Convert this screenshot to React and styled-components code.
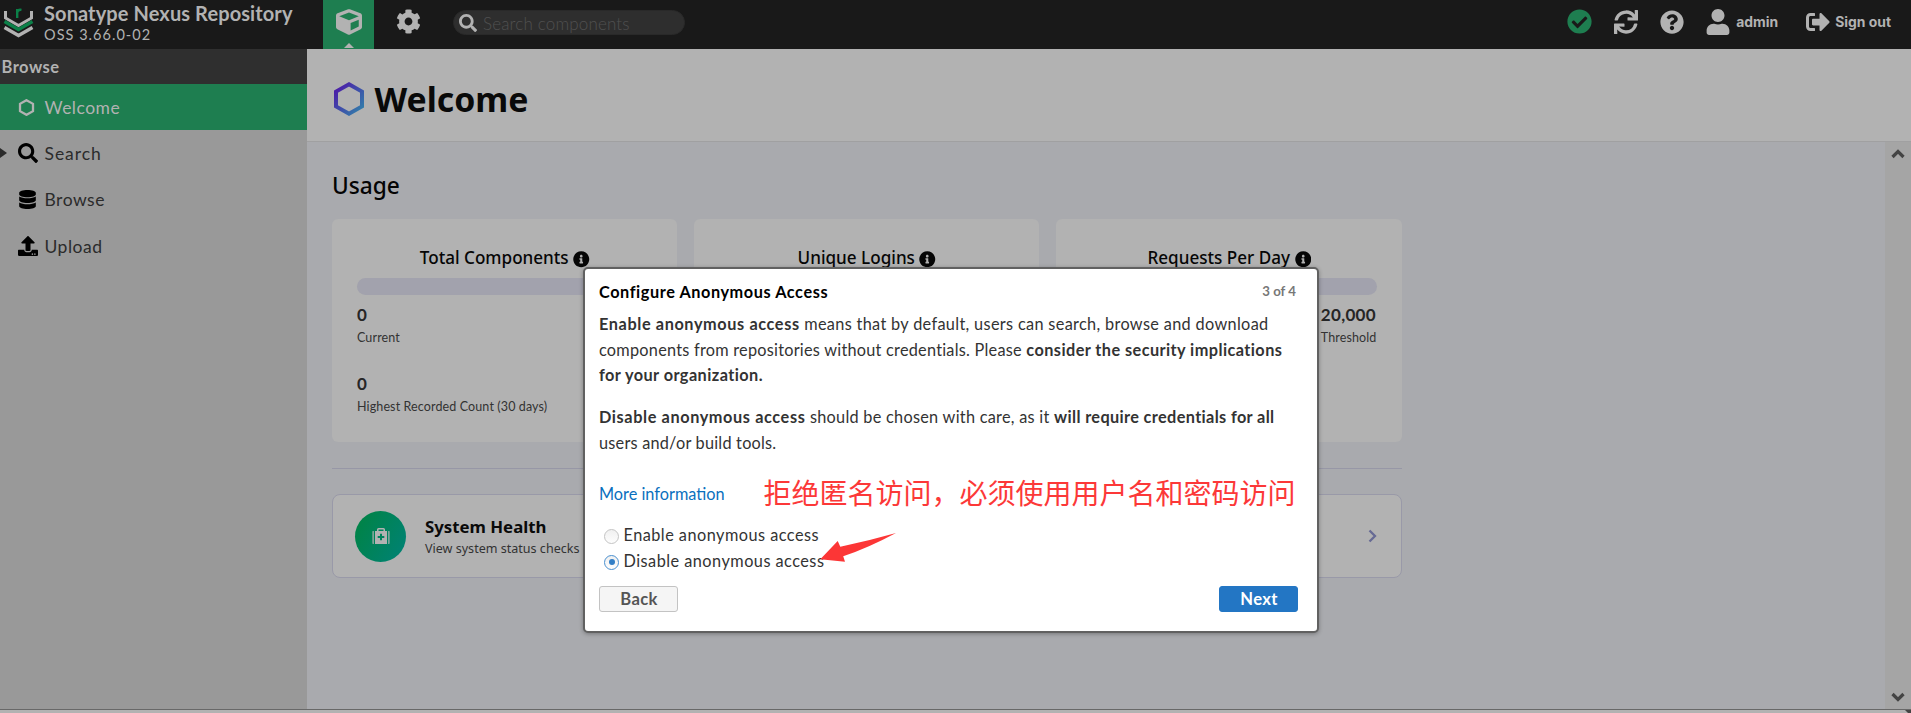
import React from 'react';
import styled, { createGlobalStyle } from 'styled-components';
import {
  FaCog, FaCube, FaSearch, FaCheckCircle, FaSync, FaQuestionCircle, FaUser,
  FaSignOutAlt, FaDatabase, FaUpload, FaInfoCircle,
} from 'react-icons/fa';

const Global = createGlobalStyle`
  * { box-sizing: border-box; }
  body { margin: 0; overflow: hidden; background: #b2b2b2; }
  svg { display: block; flex: none; }
`;

const Page = styled.div`
  position: relative;
  width: 100%;
  height: 713px;
  display: flex;
  flex-direction: column;
  font-family: Lato, sans-serif;
  color: #262626;
  white-space: nowrap;
`;

/* Header */
const Header = styled.header`
  height: 49px;
  flex: none;
  display: flex;
  background: #191919;
  color: #b2b2b2;
`;
const Brand = styled.div`
  width: 323px;
  display: flex;
  padding-left: 3px;
`;
const LogoSlot = styled.div`
  width: 41px;
  padding-top: 7px;
`;
const ProductName = styled.div`
  padding-top: 1px;
  font-size: 20px;
  font-weight: 700;
  line-height: 24px;
  letter-spacing: 0.1px;
`;
const Version = styled.div`
  font-size: 14.5px;
  line-height: 19px;
  letter-spacing: 1.03px;
`;
const ModeButton = styled.div`
  width: 51px;
  height: 49px;
  display: flex;
  flex-direction: column;
  align-items: center;
  padding-top: 8.5px;
  background: ${(p) => (p.$active ? '#1e7e50' : 'transparent')};
`;
const Caret = styled.div`
  margin-top: 8px;
  border: 5px solid transparent;
  border-top: 0;
  border-bottom-color: #b2b2b2;
`;
const GearSlot = styled.div`
  width: 79px;
  padding: 9px 0 0 22px;
`;
const SearchBox = styled.div`
  margin-top: 10px;
  width: 232px;
  height: 25px;
  display: flex;
  align-items: center;
  gap: 6px;
  padding-left: 5px;
  border-radius: 13px;
  background: #2e2e2e;
  border: 1px solid #292929;
`;
const Placeholder = styled.span`
  font-weight: 300;
  font-size: 17px;
  letter-spacing: 0.16px;
  line-height: 22px;
  padding-top: 3px;
  color: #505050;
`;
const Tools = styled.div`
  margin-left: auto;
  height: 43px;
  display: flex;
  align-items: center;
  padding-right: 20px;
`;
const Tool = styled.div`
  display: flex;
  align-items: center;
  gap: ${(p) => p.$gap || 0}px;
  margin-right: ${(p) => p.$after}px;
  color: ${(p) => p.$color || '#b2b2b2'};
  font: 700 13.9px/20px Inter, sans-serif;
`;

/* Sidebar */
const Body = styled.div`
  flex: 1;
  display: flex;
  min-height: 0;
`;
const Sidebar = styled.nav`
  width: 307px;
  flex: none;
  background: #999;
`;
const SidebarTitle = styled.div`
  height: 35px;
  padding-left: 1.5px;
  background: #2f2f2f;
  color: #b2b2b2;
  font-size: 16.5px;
  font-weight: 700;
  line-height: 36px;
  letter-spacing: 0.5px;
`;
const NavItem = styled.div`
  height: ${(p) => p.$h || 46}px;
  display: flex;
  align-items: center;
  font-size: 17.5px;
  letter-spacing: ${(p) => p.$track || 0.5}px;
  background: ${(p) => (p.$active ? '#1e7e50' : 'transparent')};
  color: ${(p) => (p.$active ? '#b2b2b2' : '#2b2b2b')};
`;
const Expander = styled.span`
  width: 7px;
  height: 10px;
  margin-right: 11px;
  border: 5px solid transparent;
  border-left: 7px solid ${(p) => (p.$shown ? '#2a2a2a' : 'transparent')};
  border-right: 0;
`;
const NavIcon = styled.span`
  width: 26.5px;
  display: flex;
  color: #000;
`;

/* Content */
const Content = styled.main`
  flex: 1;
  display: flex;
  flex-direction: column;
  background: #a9aaae;
`;
const PageHeader = styled.div`
  height: 93px;
  display: flex;
  align-items: center;
  gap: 10.5px;
  padding: 7px 0 0 27px;
  background: #b2b2b2;
  border-bottom: 1px solid #a0a0a1;
`;
const PageTitle = styled.h1`
  margin: 0;
  font: 700 33.8px/44px "Noto Sans", sans-serif;
  color: #090909;
`;
const Scroller = styled.div`
  flex: 1;
  display: flex;
  justify-content: space-between;
`;
const Sections = styled.div`
  width: 1095px;
  padding: 28px 0 0 25px;
`;
const SectionTitle = styled.h2`
  margin: 0 0 17px;
  font: 500 22.7px/32px "Noto Sans", sans-serif;
  color: #040404;
`;
const Cards = styled.div`
  display: grid;
  grid-template-columns: 345px 345px 346px;
  gap: 17px;
`;
const Card = styled.div`
  height: 223px;
  padding: 26px 25.5px 0 25px;
  border-radius: 6px;
  background: #b2b2b2;
`;
const CardTitle = styled.div`
  display: flex;
  justify-content: center;
  gap: 4.5px;
  padding-left: 1px;
  font: 500 17.1px/25px "Noto Sans", sans-serif;
  color: #060606;
`;
const InfoSlot = styled.span`
  padding-top: 6px;
`;
const Meter = styled.div`
  margin: 8px 0 9px;
  height: 17px;
  border-radius: 9px;
  background: #a2a2ad;
`;
const Stats = styled.div`
  display: flex;
  justify-content: space-between;
  margin-bottom: 25px;
`;
const Value = styled.div`
  font-size: 17px;
  font-weight: 700;
  line-height: 22px;
  letter-spacing: 0.3px;
  margin-bottom: 2px;
`;
const Label = styled.div`
  font-size: 12.5px;
  line-height: 20px;
  letter-spacing: 0.12px;
  color: #333;
`;
const Divider = styled.div`
  margin: 26px 0 25px;
  height: 1px;
  background: #9797a6;
`;
const LinkCard = styled.div`
  height: 84px;
  display: flex;
  align-items: center;
  padding: 0 24px 0 22px;
  border: 1px solid #9999a8;
  border-radius: 8px;
  background: #b2b2b2;
`;
const Badge = styled.div`
  width: 51px;
  height: 51px;
  display: flex;
  align-items: center;
  justify-content: center;
  border-radius: 50%;
  background: linear-gradient(120deg, #008346 10%, #008272 90%);
`;
const LinkText = styled.div`
  flex: 1;
  padding: 2px 0 0 19px;
  font-family: "Noto Sans", sans-serif;
`;
const LinkTitle = styled.div`
  font-size: 16.8px;
  font-weight: 700;
  line-height: 23px;
  color: #0a0a0a;
`;
const LinkNote = styled.div`
  font-size: 12.55px;
  line-height: 22px;
  color: #333;
`;
const ScrollTrack = styled.div`
  width: 26px;
  display: flex;
  flex-direction: column;
  justify-content: space-between;
  align-items: center;
  padding: 6px 0 6px;
  background: #a5a5a5;
`;
const Footer = styled.div`
  height: 4px;
  flex: none;
  display: flex;
  justify-content: flex-end;
  border-top: 1px solid #686868;
  background: #b2b2b2;
`;

/* Dialog */
const Dialog = styled.section`
  position: absolute;
  left: 583px;
  top: 267px;
  width: 736px;
  height: 366px;
  padding: 11px 19px 0 14px;
  border: 2px solid #616161;
  border-radius: 5px;
  background: #fff;
  box-shadow: 0 1px 4px rgba(0, 0, 0, 0.3);
  color: #333;
  font-size: 16.3px;
  line-height: 25.5px;
`;
const DialogHead = styled.div`
  display: flex;
  justify-content: space-between;
  line-height: 24px;
`;
const DialogTitle = styled.div`
  font-weight: 700;
  letter-spacing: 0.57px;
  color: #000;
`;
const Step = styled.div`
  padding-right: 2px;
  font-size: 13.25px;
  font-weight: 700;
  line-height: 23px;
  color: #777;
`;
const Para = styled.p`
  margin: ${(p) => p.$top}px 0 0;
`;
const Line = styled.span`
  display: block;
  letter-spacing: ${(p) => p.$track}px;
`;
const Strong = styled.strong`
  letter-spacing: ${(p) => p.$track || 0.43}px;
`;
const More = styled.a`
  display: block;
  margin-top: 25.5px;
  color: #0a70be;
`;
const Options = styled.div`
  margin-top: 16px;
  padding-left: 5px;
`;
const Option = styled.div`
  height: 26px;
  display: flex;
  align-items: center;
  gap: 4.5px;
  letter-spacing: 0.47px;
`;
const Radio = styled.span`
  width: 15px;
  height: 15px;
  margin-top: 2px;
  display: flex;
  align-items: center;
  justify-content: center;
  border-radius: 50%;
  border: 1px solid ${(p) => (p.$on ? '#4a90d0' : '#c4c4c4')};
  background: linear-gradient(#f0f0f0, #fdfdfd);
  &::after {
    content: '';
    width: 6px;
    height: 6px;
    border-radius: 50%;
    background: ${(p) => (p.$on ? '#337fc6' : 'transparent')};
  }
`;
const Actions = styled.div`
  margin-top: 11.5px;
  display: flex;
  justify-content: space-between;
`;
const Button = styled.button`
  width: 79px;
  height: 26px;
  padding: 0 0 0 1px;
  border-radius: 3px;
  border: 1px solid ${(p) => (p.$primary ? '#2376c4' : '#c3c3c3')};
  background: ${(p) => (p.$primary ? '#2376c4' : '#f5f5f5')};
  color: ${(p) => (p.$primary ? '#fff' : '#555')};
  font: 700 16.6px/22px Lato, sans-serif;
  letter-spacing: 0.3px;
`;
const Note = styled.div`
  position: absolute;
  left: 763.5px;
  top: 472px;
  font: 400 28px/40px "Noto Sans CJK SC", sans-serif;
  color: #fc3838;
`;
const Pointer = styled.svg`
  position: absolute;
  left: 820px;
  top: 532px;
`;

const Logo = () => (
  <svg width="31" height="32" viewBox="0 0 31 32" fill="none">
    <path d="M2.5 4v7l13 7.5 13-7.5V4" stroke="#b2b2b2" strokeWidth="3" />
    <path d="M1.5 14.5l14 8 14-8" stroke="#0b8048" strokeWidth="3.4" />
    <path d="M1.5 20.5l14 8 14-8" stroke="#b2b2b2" strokeWidth="3.4" />
    <path d="M14.2 11V2M14.2 5.5c.4-2 2-3 4.3-2.6" stroke="#0b8048" strokeWidth="2.4" />
  </svg>
);
const Hexagon = ({ w, h, stroke, sw }) => (
  <svg width={w} height={h} viewBox="0 0 30 34" fill="none">
    <defs>
      <linearGradient id="hex" x1="0" y1="0" x2="1" y2="1">
        <stop offset="0.1" stopColor="#4b20a8" />
        <stop offset="0.9" stopColor="#3379aa" />
      </linearGradient>
    </defs>
    <path d="M15 2.3L28 9.6v14.8L15 31.7 2 24.4V9.6z" stroke={stroke} strokeWidth={sw} />
  </svg>
);
const Kit = () => (
  <svg width="18" height="16" viewBox="0 0 18 16" fill="#b2b2b2">
    <path d="M.5 3.5Q.5 3 1 3h.7v13H1Q.5 16 .5 15zM17.5 3.5Q17.5 3 17 3h-.7v13h.7q.5 0 .5-1z" />
    <path fillRule="evenodd" d="M3 3h2V1.500Q5 0 6.500 0h5Q13 0 13 1.500V3h2v13H3zM6.500 3h5V1.600h-5zM8 5.700V8H5.700v2H8v2.300h2V10h2.300V8H10V5.700z" />
  </svg>
);
const Chevron = ({ down }) => (
  <svg width="14" height="11" viewBox="0 0 14 11" fill="none">
    <path d={down ? 'M1.5 2l5.5 5.5L12.5 2' : 'M1.5 9L7 3.5 12.5 9'} stroke="#444" strokeWidth="3.2" />
  </svg>
);

const Stat = ({ value, label }) => (
  <div>
    <Value>{value}</Value>
    <Label>{label}</Label>
  </div>
);
const UsageCard = ({ title, children }) => (
  <Card>
    <CardTitle>
      {title}
      <InfoSlot><FaInfoCircle size={16.5} /></InfoSlot>
    </CardTitle>
    <Meter />
    {children}
  </Card>
);

export default function App() {
  return (
    <Page>
      <Global />
      <Header>
        <Brand>
          <LogoSlot><Logo /></LogoSlot>
          <div>
            <ProductName>Sonatype Nexus Repository</ProductName>
            <Version>OSS 3.66.0-02</Version>
          </div>
        </Brand>
        <ModeButton $active>
          <FaCube size={26} />
          <Caret />
        </ModeButton>
        <GearSlot><FaCog size={25} /></GearSlot>
        <SearchBox>
          <FaSearch size={18} />
          <Placeholder>Search components</Placeholder>
        </SearchBox>
        <Tools>
          <Tool $after={21.5} $color="#1e7e50"><FaCheckCircle size={25} /></Tool>
          <Tool $after={22}><FaSync size={24} /></Tool>
          <Tool $after={21.5}><FaQuestionCircle size={24} /></Tool>
          <Tool $after={28} $gap={5}><FaUser size={26} />admin</Tool>
          <Tool $after={0} $gap={5}><FaSignOutAlt size={24} />Sign out</Tool>
        </Tools>
      </Header>
      <Body>
        <Sidebar>
          <SidebarTitle>Browse</SidebarTitle>
          <NavItem $active>
            <Expander />
            <NavIcon><Hexagon w={17} h={17} stroke="#b2b2b2" sw={4.6} /></NavIcon>
            Welcome
          </NavItem>
          <NavItem $track={0.95}>
            <Expander $shown />
            <NavIcon><FaSearch size={20} /></NavIcon>
            Search
          </NavItem>
          <NavItem $h={47}>
            <Expander />
            <NavIcon><FaDatabase size={19} /></NavIcon>
            Browse
          </NavItem>
          <NavItem>
            <Expander />
            <NavIcon><FaUpload size={20} /></NavIcon>
            Upload
          </NavItem>
        </Sidebar>
        <Content>
          <PageHeader>
            <Hexagon w={30} h={34} stroke="url(#hex)" sw={4} />
            <PageTitle>Welcome</PageTitle>
          </PageHeader>
          <Scroller>
            <Sections>
              <SectionTitle>Usage</SectionTitle>
              <Cards>
                <UsageCard title="Total Components">
                  <Stats><Stat value="0" label="Current" /></Stats>
                  <Stat value="0" label="Highest Recorded Count (30 days)" />
                </UsageCard>
                <UsageCard title="Unique Logins" />
                <UsageCard title="Requests Per Day">
                  <Stats><span /><Stat value="20,000" label="Threshold" /></Stats>
                </UsageCard>
              </Cards>
              <Divider />
              <LinkCard>
                <Badge><Kit /></Badge>
                <LinkText>
                  <LinkTitle>System Health</LinkTitle>
                  <LinkNote>View system status checks</LinkNote>
                </LinkText>
                <svg width="9" height="14" viewBox="0 0 9 14" fill="none">
                  <path d="M1.5 1.5L7 7l-5.500 5.500" stroke="#666a94" strokeWidth="2.3" />
                </svg>
              </LinkCard>
            </Sections>
            <ScrollTrack>
              <Chevron />
              <Chevron down />
            </ScrollTrack>
          </Scroller>
        </Content>
      </Body>
      <Footer>
        <svg width="6" height="3" viewBox="0 0 6 3"><path d="M0 0h6v3H3z" fill="#444" /></svg>
      </Footer>
      <Dialog>
        <DialogHead>
          <DialogTitle>Configure Anonymous Access</DialogTitle>
          <Step>3 of 4</Step>
        </DialogHead>
        <Para $top={7}>
          <Line $track={0.33}>
            <Strong $track={0.6}>Enable anonymous access</Strong> means that by default, users can search, browse and download
          </Line>
          <Line $track={0.24}>
            components from repositories without credentials. Please <Strong>consider the security implications</Strong>
          </Line>
          <Line><Strong>for your organization.</Strong></Line>
        </Para>
        <Para $top={16.5}>
          <Line $track={0.27}>
            <Strong $track={0.6}>Disable anonymous access</Strong> should be chosen with care, as it <Strong $track={0.36}>will require credentials for all</Strong>
          </Line>
          <Line $track={0.22}>users and/or build tools.</Line>
        </Para>
        <More>More information</More>
        <Options>
          <Option><Radio />Enable anonymous access</Option>
          <Option><Radio $on />Disable anonymous access</Option>
        </Options>
        <Actions>
          <Button>Back</Button>
          <Button $primary>Next</Button>
        </Actions>
      </Dialog>
      <Note>拒绝匿名访问，必须使用用户名和密码访问</Note>
      <Pointer width="77" height="31" viewBox="0 0 77 31">
        <path d="M.3 27.3L17.7 9l2.6 5.7Q48 9 76 1 48 16 23.200 24.300l1.800 5.400z" fill="#fc3636" />
      </Pointer>
    </Page>
  );
}
